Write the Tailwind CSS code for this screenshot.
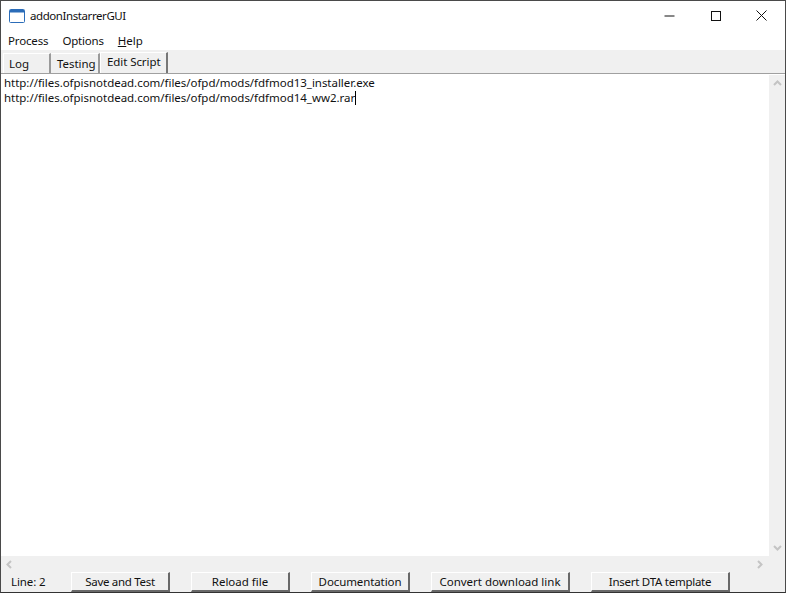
<!DOCTYPE html>
<html><head><meta charset="utf-8"><script src="https://cdn.jsdelivr.net/npm/@tailwindcss/browser@4"></script></head>
<body class="m-0 overflow-hidden bg-white">
<div class="w-[786px] h-[593px] flex flex-col bg-white border border-[#4a4a4a] border-b-[#333] font-['Noto_Sans','Open_Sans',sans-serif] text-[11.5px] leading-[16px] text-[#111]">
  <div class="h-[29px] flex items-center shrink-0 bg-white">
    <svg class="ml-[8px] w-[16px] h-[14px]" viewBox="0 0 16 14"><rect x="0.5" y="0.5" width="15" height="13" rx="1" fill="#fff" stroke="#2b6cb8"/><rect x="1" y="1" width="14" height="2.5" fill="#2b6cb8"/></svg>
    <span class="ml-[5px] tracking-[-0.42px]">addonInstarrerGUI</span>
    <div class="ml-auto flex items-center h-full">
      <svg class="w-[46px] h-[29px]" viewBox="0 0 46 29"><path d="M17.5 15 H27.5" stroke="#111" stroke-width="1"/></svg>
      <svg class="w-[46px] h-[29px]" viewBox="0 0 46 29"><rect x="18.5" y="10.5" width="9" height="9" fill="none" stroke="#111"/></svg>
      <svg class="w-[46px] h-[29px]" viewBox="0 0 46 29"><path d="M17.5 9.5 L27.5 19.5 M27.5 9.5 L17.5 19.5" stroke="#111" stroke-width="1"/></svg>
    </div>
  </div>
  <div class="h-[20px] flex items-center gap-[14px] pl-[7px] pt-[2px] shrink-0 bg-white">
    <span class="tracking-[-0.15px]">Process</span><span class="tracking-[-0.2px]">Options</span><span><span class="underline">H</span>elp</span>
  </div>
  <div class="h-[23px] flex items-end pl-[2px] shrink-0 bg-[#f0f0f0]">
    <div class="w-[48px] h-[20px] pl-[5px] pt-[2px] bg-[#f0f0f0] border-l border-t border-white border-r-2 border-r-[#9a9a9a]">Log</div>
    <div class="w-[49px] h-[20px] pl-[6px] pt-[2px] bg-[#f0f0f0] border-t border-white border-r-2 border-r-[#9a9a9a] tracking-[-0.05px]">Testing</div>
    <div class="w-[68px] h-[22px] pl-[6px] pt-[1px] mb-[-1px] bg-[#f0f0f0] border-l border-t border-white border-r-2 border-r-[#777] tracking-[-0.08px]">Edit Script</div>
  </div>
  <div class="h-[2px] shrink-0 bg-[#a0a0a0] border-b border-white"></div>
  <div class="flex-1 min-h-0 flex">
    <div class="flex-1 bg-white pl-[3px] leading-[15px] tracking-[-0.03px]">
      <div>http://files.ofpisnotdead.com/files/ofpd/mods/fdfmod13_installer.exe</div>
      <div class="flex items-center">http://files.ofpisnotdead.com/files/ofpd/mods/fdfmod14_ww2.rar<span class="w-px h-[14px] bg-black"></span></div>
    </div>
    <div class="w-[16px] bg-[#f0f0f0] flex flex-col justify-between py-[5px] items-center">
      <svg class="w-[9px] h-[6px]" viewBox="0 0 9 6"><path d="M1 5 L4.5 1.5 L8 5" fill="none" stroke="#c4c4c4" stroke-width="2"/></svg>
      <svg class="w-[9px] h-[6px]" viewBox="0 0 9 6"><path d="M1 1 L4.5 4.5 L8 1" fill="none" stroke="#c4c4c4" stroke-width="2"/></svg>
    </div>
  </div>
  <div class="h-[16px] shrink-0 bg-[#f0f0f0] flex items-center justify-between pl-[5px] pr-[22px]">
    <svg class="w-[6px] h-[9px]" viewBox="0 0 6 9"><path d="M5 1 L1.5 4.5 L5 8" fill="none" stroke="#c4c4c4" stroke-width="2"/></svg>
    <svg class="w-[6px] h-[9px]" viewBox="0 0 6 9"><path d="M1 1 L4.5 4.5 L1 8" fill="none" stroke="#c4c4c4" stroke-width="2"/></svg>
  </div>
  <div class="h-[20px] shrink-0 bg-[#f0f0f0] flex items-start pl-[10px]">
    <span class="w-[60px] leading-[20px] tracking-[-0.1px]">Line: 2</span>
    <div class="flex gap-[21px]">
      <button class="w-[99px] h-[20px] bg-[#f0f0f0] border border-white border-r-[#696969] border-b-[#696969] border-r-2 border-b-2 text-center leading-[15px] tracking-[-0.3px]">Save and Test</button>
      <button class="w-[99px] h-[20px] bg-[#f0f0f0] border border-white border-r-[#696969] border-b-[#696969] border-r-2 border-b-2 text-center leading-[15px]">Reload file</button>
      <button class="w-[99px] h-[20px] bg-[#f0f0f0] border border-white border-r-[#696969] border-b-[#696969] border-r-2 border-b-2 text-center leading-[15px] tracking-[-0.1px]">Documentation</button>
      <button class="w-[139px] h-[20px] bg-[#f0f0f0] border border-white border-r-[#696969] border-b-[#696969] border-r-2 border-b-2 text-center leading-[15px]">Convert download link</button>
      <button class="w-[139px] h-[20px] bg-[#f0f0f0] border border-white border-r-[#696969] border-b-[#696969] border-r-2 border-b-2 text-center leading-[15px] tracking-[-0.26px]">Insert DTA template</button>
    </div>
  </div>
</div>
</body></html>
